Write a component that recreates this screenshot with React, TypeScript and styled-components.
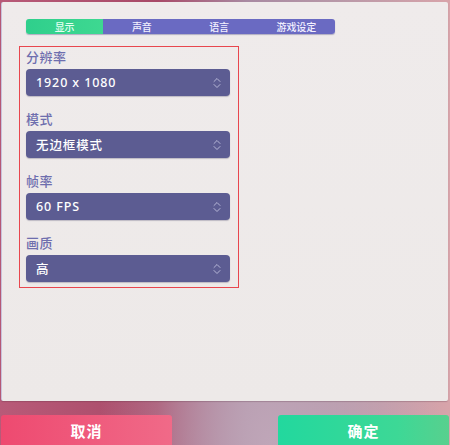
import React from 'react'
import styled, { createGlobalStyle } from 'styled-components'

const GlobalStyle = createGlobalStyle`
  html, body {
    margin: 0;
    padding: 0;
  }
  body {
    font-family: "Noto Sans", "Noto Sans CJK SC", sans-serif;
  }
`

const Screen = styled.div`
  width: 450px;
  height: 445px;
  overflow: hidden;
  display: flex;
  flex-direction: column;
  background:
    radial-gradient(ellipse at 60% 100%, #bfa6b8 0%, rgba(191,166,184,0) 45%),
    linear-gradient(90deg, #b85a78 0%, #a84a68 35%, #a88aa2 55%, #b898a8 75%, #d8a4aa 100%);
`

const Panel = styled.div`
  flex-shrink: 0;
  margin: 2px 2px 0 1px;
  height: 399px;
  background: linear-gradient(180deg, #efebeb 0%, #ede9e8 100%);
  border-left: 1px solid #c8c2dc;
  border-radius: 2px;
  box-shadow: 0 1px 1px rgba(80, 40, 60, 0.25);
  padding: 17px 0 0 24px;
  box-sizing: border-box;
`

const Tabs = styled.div`
  display: flex;
  width: 309px;
  height: 15px;
  border-radius: 3px;
  overflow: hidden;
  box-shadow: 0 1px 1px rgba(60, 60, 120, 0.35);
`

const Tab = styled.div<{ $active?: boolean }>`
  flex: 1;
  display: flex;
  align-items: center;
  justify-content: center;
  font-size: 10px;
  font-weight: 500;
  color: ${p => (p.$active ? '#e6fff2' : '#f2f0ff')};
  background: ${p => (p.$active ? 'linear-gradient(90deg, #2fcf8c, #3ed891)' : '#6a6ac2')};
`

const Settings = styled.div`
  margin: 12px 0 0 -7px;
  width: 220px;
  height: 242px;
  box-sizing: border-box;
  border: 1.5px solid #e8464e;
  padding: 1px 8px 0 6px;
  display: flex;
  flex-direction: column;
  gap: 14px;
`

const Field = styled.div`
  display: flex;
  flex-direction: column;
  gap: 2px;
`

const Label = styled.div`
  font-size: 13px;
  line-height: 19px;
  font-weight: 500;
  color: #6e6eae;
  letter-spacing: 0.5px;
`

const Select = styled.div`
  height: 27px;
  border-radius: 4px;
  background: #5c5c92;
  display: flex;
  align-items: center;
  justify-content: space-between;
  padding: 0 9px 0 10px;
  color: #ffffff;
  font-size: 12.5px;
  font-weight: 500;
  letter-spacing: 0.9px;
  box-shadow: 0 1px 1px rgba(40, 40, 80, 0.25);
`

const Footer = styled.div`
  flex-shrink: 0;
  display: flex;
  justify-content: space-between;
  padding: 14px 1px 0 1px;
`

const Button = styled.div<{ $tone: 'cancel' | 'ok' }>`
  width: 171px;
  height: 30px;
  border-radius: 3px 3px 0 0;
  display: flex;
  align-items: center;
  justify-content: center;
  color: #ffffff;
  font-size: 15px;
  font-weight: 700;
  letter-spacing: 1px;
  background: ${p =>
    p.$tone === 'cancel'
      ? 'linear-gradient(90deg, #ee4a70 0%, #f06a88 100%)'
      : 'linear-gradient(90deg, #22d89e 0%, #3dd896 70%, #58d08e 100%)'};
`

const Chevron = () => (
  <svg width="8" height="12" viewBox="0 0 8 12" fill="none">
    <path d="M1 4.5 L4 1.5 L7 4.5" stroke="#b6b6d6" strokeWidth="1" strokeLinecap="round" strokeLinejoin="round" />
    <path d="M1 7.5 L4 10.5 L7 7.5" stroke="#b6b6d6" strokeWidth="1" strokeLinecap="round" strokeLinejoin="round" />
  </svg>
)

const fields = [
  { label: '分辨率', value: '1920 x 1080' },
  { label: '模式', value: '无边框模式' },
  { label: '帧率', value: '60 FPS' },
  { label: '画质', value: '高' },
]

const tabs = ['显示', '声音', '语言', '游戏设定']

const App: React.FC = () => {
  return (
    <Screen>
      <GlobalStyle />
      <Panel>
        <Tabs>
          {tabs.map((t, i) => (
            <Tab key={t} $active={i === 0}>{t}</Tab>
          ))}
        </Tabs>
        <Settings>
          {fields.map(f => (
            <Field key={f.label}>
              <Label>{f.label}</Label>
              <Select>
                <span>{f.value}</span>
                <Chevron />
              </Select>
            </Field>
          ))}
        </Settings>
      </Panel>
      <Footer>
        <Button $tone="cancel">取消</Button>
        <Button $tone="ok">确定</Button>
      </Footer>
    </Screen>
  )
}

export default App
